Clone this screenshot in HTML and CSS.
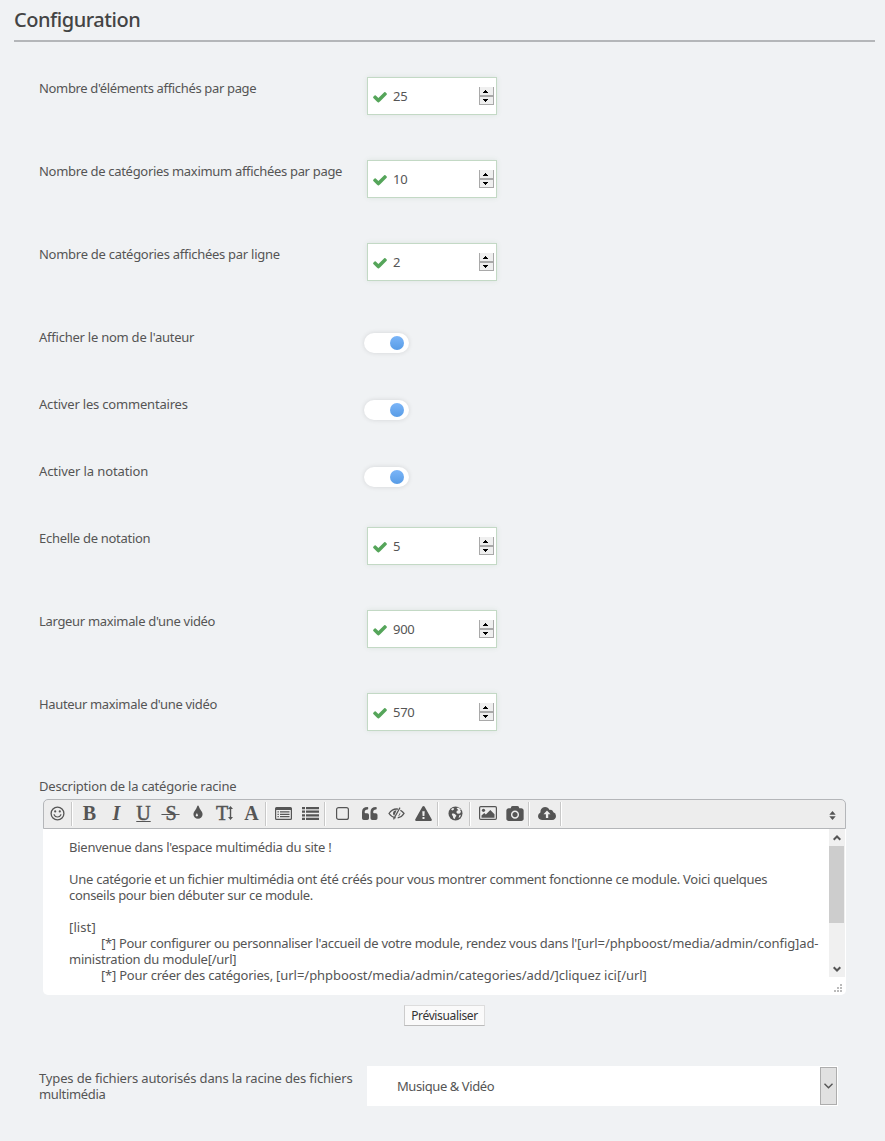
FILE: index.html
```html
<!DOCTYPE html>
<html lang="fr">
<head>
<meta charset="utf-8">
<title>Configuration</title>
<link rel="stylesheet" href="styles.css">
</head>
<body>
<svg class="defs" width="0" height="0">
  <defs>
    <symbol id="check" viewBox="0 0 1792 1792"><path d="M1671 566q0 40-28 68l-724 724-136 136q-28 28-68 28t-68-28l-136-136-362-362q-28-28-28-68t28-68l136-136q28-28 68-28t68 28l294 295 656-657q28-28 68-28t68 28l136 136q28 28 28 68z"/></symbol>
    <symbol id="spin" viewBox="0 0 15 18"><path fill="#efefef" d="M0 0h15v18H0z"/><path fill="#a9a9a9" d="M0 0h1v18H0zM14 0h1v18h-1zM0 8h15v2H0zM0 17h15v1H0z"/><path fill="#000" d="M4 6h5V5H8V4H7V3H6v1H5v1H4zM4 12h5v1H8v1H7v1H6v-1H5v-1H4z"/></symbol>
  </defs>
</svg>
<main class="page">
  <h1 class="title">Configuration</h1>
  <form class="form">
    <div class="row"><label class="label t1">Nombre d'éléments affichés par page</label><div class="number"><svg class="check"><use href="#check"/></svg><span class="value">25</span><svg class="spin"><use href="#spin"/></svg></div></div>
    <div class="row"><label class="label t2">Nombre de catégories maximum affichées par page</label><div class="number"><svg class="check"><use href="#check"/></svg><span class="value">10</span><svg class="spin"><use href="#spin"/></svg></div></div>
    <div class="row"><label class="label t3">Nombre de catégories affichées par ligne</label><div class="number"><svg class="check"><use href="#check"/></svg><span class="value">2</span><svg class="spin"><use href="#spin"/></svg></div></div>
    <div class="row short"><label class="label t4">Afficher le nom de l'auteur</label><div class="toggle"><span class="knob"></span></div></div>
    <div class="row short"><label class="label t5">Activer les commentaires</label><div class="toggle"><span class="knob"></span></div></div>
    <div class="row short"><label class="label t6">Activer la notation</label><div class="toggle"><span class="knob"></span></div></div>
    <div class="row"><label class="label t7">Echelle de notation</label><div class="number"><svg class="check"><use href="#check"/></svg><span class="value">5</span><svg class="spin"><use href="#spin"/></svg></div></div>
    <div class="row"><label class="label t8">Largeur maximale d'une vidéo</label><div class="number"><svg class="check"><use href="#check"/></svg><span class="value">900</span><svg class="spin"><use href="#spin"/></svg></div></div>
    <div class="row"><label class="label t9">Hauteur maximale d'une vidéo</label><div class="number"><svg class="check"><use href="#check"/></svg><span class="value">570</span><svg class="spin"><use href="#spin"/></svg></div></div>

    <label class="desc t10">Description de la catégorie racine</label>
    <section class="editor">
      <div class="toolbar">
        <div class="group">
          <span class="tool"><svg width="15" height="15" viewBox="0 0 15 15"><circle cx="7.5" cy="7.5" r="6.4" fill="none" stroke="#555" stroke-width="1.3"/><circle cx="5.2" cy="5.4" r="1.1"/><circle cx="9.8" cy="5.4" r="1.1"/><path d="M4.1 8.7Q5 11 7.5 11t3.4-2.3" fill="none" stroke="#555" stroke-width="1.2" stroke-linecap="round"/></svg></span>
        </div>
        <div class="group">
          <span class="tool letter">B</span>
          <span class="tool letter italic">I</span>
          <span class="tool letter under">U</span>
          <span class="tool letter strike">&nbsp;S&nbsp;</span>
          <span class="tool"><svg width="16" height="16" viewBox="0 0 1792 1792"><path d="M896 1152q0-36-20-69-1-1-15.5-22.5t-25.5-38-25-44-21-50.5q-4-16-21-16t-21 16q-7 23-21 50.5t-25 44-25.5 38-15.5 22.5q-20 33-20 69 0 53 37.5 90.5t90.5 37.5 90.5-37.5 37.5-90.5zm512-128q0 212-150 362t-362 150-362-150-150-362q0-145 81-275 6-9 62.5-90.5t101-151 99.5-178 83-201.5q9-30 34-47t51-17 51.5 17 33.5 47q28 93 83 201.5t99.5 178 101 151 62.5 90.5q81 127 81 275z"/></svg></span>
          <span class="tool letter size">T<svg width="5" height="14" viewBox="0 0 5 14"><path d="M2.500 0L5 3H3.200v8H5l-2.500 3L0 11h1.800V3H0z"/></svg></span>
          <span class="tool letter">A</span>
        </div>
        <div class="group">
          <span class="tool"><svg width="17" height="13" viewBox="0 0 17 13"><path fill-rule="evenodd" d="M1.500 0h14Q17 0 17 1.500v10Q17 13 15.500 13h-14Q0 13 0 11.500v-10Q0 0 1.500 0zM1.200 3v8.300q0 .5.500.5h13.600q.5 0 .5-.5V3z"/><path d="M2.500 4.300h1.300v1.200H2.500zM5 4.300h9.500v1.200H5zM2.500 6.700h1.300v1.200H2.500zM5 6.700h9.500v1.200H5zM2.500 9.100h1.300v1.200H2.500zM5 9.100h9.500v1.200H5z"/></svg></span>
          <span class="tool"><svg width="17" height="13" viewBox="0 0 17 13"><path d="M0 0h3v2.200H0zM4 0h13v2.200H4zM0 3.600h3v2.200H0zM4 3.600h13v2.200H4zM0 7.200h3v2.200H0zM4 7.200h13v2.200H4zM0 10.800h3V13H0zM4 10.800h13V13H4z"/></svg></span>
        </div>
        <div class="group">
          <span class="tool"><svg width="13" height="13" viewBox="0 0 13 13"><rect x=".6" y=".6" width="11.800" height="11.800" rx="2" fill="none" stroke="#555" stroke-width="1.200"/></svg></span>
          <span class="tool"><svg width="16" height="13" viewBox="0 0 16 13"><path id="q" d="M7 8v3.200Q7 13 5.200 13H1.800Q0 13 0 11.200V5Q0 0 5.500 0q.7 0 .7.700v1q0 .7-.7.700Q2.700 2.400 2.700 5v.4q0 .8.800.8h1.700Q7 6.200 7 8z"/><use href="#q" x="8.500"/></svg></span>
          <span class="tool"><svg width="17" height="13" viewBox="0 0 17 13"><path d="M7.600 10.800Q3.500 10.200 1 6.500 4 2 8.500 2q.8 0 1.600.2M12.400 3.300Q14.700 4.700 16 6.500q-2.300 3.700-6.300 4.300" fill="none" stroke="#555" stroke-width="1.300"/><path d="M11.500.3l1 .6L6 12.700l-1-.6z"/><path d="M8.600 3.200Q5.300 3.200 5 6.200q0 1.500 1.200 2.600zM12.200 5.500q.5 2.700-2.200 4z"/></svg></span>
          <span class="tool"><svg width="17" height="15" viewBox="0 0 17 15"><path fill-rule="evenodd" d="M7.500.600q1-1.200 2 0l7.200 12.700q.5 1.400-1 1.700H1.300q-1.500-.3-1-1.700zM7.300 5.200l.3 4.900h1.800l.3-4.900zM7.500 11v2h2v-2z"/></svg></span>
        </div>
        <div class="group">
          <span class="tool"><svg width="15" height="15" viewBox="0 0 15 15"><circle cx="7.500" cy="7.500" r="7"/><path fill="#ededed" d="M8.500 2.200l1.700-.6q1.700.6 2.900 2.300l-1 .2.900 1.600-1 1.700-2.300.4-1.300-1.300.4-1.700 1.600-.6zM3 3.300l1.800-1.200 1.400.3-.5 1.400-1.500.6zM4.600 7.300l2.300.8 1.600 1.600-1.200 1.500-.3 1.900-1.700-.8-.5-2.200-1-1.300zM11.300 9.200l1.600-.5-.8 2.200-1.500 1z"/></svg></span>
        </div>
        <div class="group">
          <span class="tool"><svg width="18" height="14" viewBox="0 0 18 14"><rect x=".6" y=".6" width="16.800" height="12.800" rx="1.200" fill="none" stroke="#555" stroke-width="1.200"/><circle cx="4.500" cy="4.300" r="1.600"/><path d="M2.500 11.700V9.500L5.300 7l1.500 1.500 4.500-4.400 4.200 4.200v3.400z"/></svg></span>
          <span class="tool"><svg width="18" height="15" viewBox="0 0 1920 1664"><path d="M960 672q119 0 203.500 84.500t84.500 203.500-84.500 203.500-203.500 84.500-203.500-84.500-84.500-203.500 84.500-203.500 203.500-84.500zm704-416q106 0 181 75t75 181v896q0 106-75 181t-181 75h-1408q-106 0-181-75t-75-181v-896q0-106 75-181t181-75h224l51-136q19-49 69.500-84.500t103.500-35.500h512q53 0 103.500 35.500t69.500 84.500l51 136h224zm-704 1152q185 0 316.500-131.500t131.500-316.500-131.500-316.500-316.500-131.500-316.500 131.500-131.500 316.500 131.500 316.500 316.500 131.500z"/></svg></span>
        </div>
        <div class="group">
          <span class="tool"><svg width="18" height="13" viewBox="0 0 18 13"><path fill-rule="evenodd" d="M4 13Q0 12.600 0 9q.1-2.400 2.400-3.500Q2.200.5 7 0q3.200 0 4.600 3 2.800-1.200 3.800 2.300Q18 6 18 9q-.2 3.700-3.800 4zM9 3.500L5.500 7.200h2.400V11h2.300V7.200h2.300z"/></svg></span>
        </div>
        <svg class="more" width="7" height="9" viewBox="0 0 7 9"><path d="M3.500 0L6.700 3.700H.3zM3.500 9L.3 5.300h6.400z"/></svg>
      </div>
      <div class="textarea">
        <div class="content">
          <p class="line"><span class="c1">Bienvenue dans l'espace multimédia du site !</span></p>
          <p class="line"></p>
          <p class="line"><span class="c2">Une catégorie et un fichier multimédia ont été créés pour vous montrer comment fonctionne ce module. Voici quelques</span></p>
          <p class="line"><span class="c3">conseils pour bien débuter sur ce module.</span></p>
          <p class="line"></p>
          <p class="line"><span class="c4">[list]</span></p>
          <p class="line tab"><span class="c5">[*] Pour configurer ou personnaliser l'accueil de votre module, rendez vous dans l'</span><span class="c5b">[url=/phpboost/media/admin/config]ad-</span></p>
          <p class="line"><span class="c6">ministration du module[/url]</span></p>
          <p class="line tab"><span class="c7">[*] Pour créer des catégories, </span><span class="c7b">[url=/phpboost/media/admin/categories/add/]cliquez ici[/url]</span></p>
        </div>
        <div class="side">
          <div class="scrollbar">
            <svg width="8" height="6" viewBox="0 0 8 6"><path d="M.7 4.800L4 1.500l3.300 3.300" fill="none" stroke="#555" stroke-width="2"/></svg>
            <span class="thumb"></span>
            <svg class="down" width="8" height="6" viewBox="0 0 8 6"><path d="M.7 1.200L4 4.500l3.300-3.300" fill="none" stroke="#555" stroke-width="2"/></svg>
          </div>
          <svg class="grip" width="8" height="8" viewBox="0 0 8 8"><path fill="#bbb" d="M6 0h2v2H6zM3 3h2v2H3zM6 3h2v2H6zM0 6h2v2H0zM3 6h2v2H3zM6 6h2v2H6z"/></svg>
        </div>
      </div>
    </section>
    <button type="button" class="preview"><span class="pv">Prévisualiser</span></button>
    <div class="row last">
      <label class="label types"><span class="t11">Types de fichiers autorisés dans la racine des fichiers</span><br><span class="t12">multimédia</span></label>
      <div class="select"><span class="sv">Musique &amp; Vidéo</span><span class="arrow"><svg width="9" height="6" viewBox="0 0 9 6"><path d="M.5.800l4 4 4-4" fill="none" stroke="#555" stroke-width="1.400"/></svg></span></div>
    </div>
  </form>
</main>
</body>
</html>
```

FILE: styles.css
```css
* { box-sizing: border-box; }
body { margin: 0; background: #f0f2f4; color: #555; font: 13px/16px "Trebuchet MS", "Noto Sans", "Open Sans", sans-serif; }
svg { display: block; flex: none; fill: #555; }
.defs { position: absolute; }
.page { height: 1141px; padding: 0 10px 0 14px; overflow: hidden; }
.title { margin: 0; height: 42px; padding-top: 7px; border-bottom: 2px solid #b4b6b9; font-size: 20px; line-height: 26px; font-weight: 500; letter-spacing: -.46px; color: #444; }
.form { display: flex; flex-direction: column; padding: 35px 25px 0; }
.row { display: flex; height: 83px; flex: none; }
.row.short { height: 67px; }
.label { width: 328px; padding-top: 3px; white-space: nowrap; }
.number { display: flex; align-items: center; width: 130px; height: 38px; padding: 0 2px 0 4px; background: #fff; border: 1px solid #c3d9c5; box-shadow: 0 0 5px rgba(80,130,80,.12); }
.check { width: 16px; height: 16px; margin: 1px 5px 0 0; fill: #55a55a; }
.value { flex: 1; letter-spacing: -.3px; }
.spin { width: 15px; height: 18px; }
.toggle { display: flex; align-items: center; justify-content: flex-end; width: 45px; height: 20px; margin: 7px 0 0 -3px; padding-right: 5px; border-radius: 10px; background: #fff; box-shadow: 0 0 5px rgba(0,0,0,.12); }
.knob { width: 14px; height: 14px; border-radius: 50%; background: linear-gradient(#7bb5f8, #589ce6); }
.desc { margin-top: 2px; height: 21px; white-space: nowrap; }
.editor { width: 803px; margin-left: 4px; }
.toolbar { display: flex; align-items: center; height: 30px; background: #ededed; border: 1px solid #b4b6b9; border-radius: 5px 5px 0 0; }
.group { display: flex; height: 24px; margin-left: 4px; border-right: 1px solid #c8c8c8; box-shadow: 1px 0 #fff; }
.group:first-child { margin-left: 0; }
.tool { display: flex; align-items: center; justify-content: center; width: 27px; height: 24px; padding-bottom: 2px; }
.letter { font: bold 20px/22px "Liberation Serif", serif; }
.italic { font-style: italic; }
.under { text-decoration: underline; text-decoration-thickness: 1px; font-weight: normal; -webkit-text-stroke: .5px #555; }
.strike { text-decoration: line-through; text-decoration-thickness: 1px; font-weight: normal; -webkit-text-stroke: .5px #555; letter-spacing: -1px; }
.size { font-weight: normal; -webkit-text-stroke: .5px #555; }
.more { margin: 3px 9px 0 auto; }
.textarea { display: flex; height: 166px; background: #fff; border-radius: 0 0 5px 5px; }
.content { flex: 1; padding: 10px 0 0 26px; overflow: hidden; white-space: nowrap; }
.line { margin: 0; height: 16px; }
.tab { padding-left: 32px; }
.side { width: 17px; }
.scrollbar { display: flex; flex-direction: column; align-items: center; width: 16px; height: 148px; padding-top: 6px; background: #f0f0f0; }
.thumb { width: 15px; height: 77px; margin-top: 5px; background: #cdcdcd; align-self: flex-start; }
.down { margin: auto 0 5px; }
.grip { margin: 7px 0 0 5px; }
.preview { align-self: flex-start; width: 81px; height: 21px; margin: 10px 0 0 365px; padding: 0; background: #fafafa; border: 1px solid; border-color: #ddd #ddd #bbb #ccc; color: #333; font: 12px/16px "Trebuchet MS", "Noto Sans", sans-serif; white-space: nowrap; }
.last { height: 75px; margin-top: 40px; }
.types { padding-top: 4px; }
.select { display: flex; align-items: center; width: 471px; height: 40px; padding: 1px 1px 1px 30px; background: #fff; flex: none; }
.arrow { display: flex; align-items: center; justify-content: center; width: 17px; height: 38px; margin-left: auto; background: #e1e1e1; border: 1px solid #adadad; }

/* Tracking per text run */
.t1 { letter-spacing: -.34px; }
.t2 { letter-spacing: -.31px; }
.t3 { letter-spacing: -.275px; }
.t4 { letter-spacing: -.24px; }
.t5 { letter-spacing: -.19px; }
.t6 { letter-spacing: -.1px; }
.t7 { letter-spacing: -.29px; }
.t8 { letter-spacing: -.32px; }
.t9 { letter-spacing: -.34px; }
.t10 { letter-spacing: -.2px; }
.t11 { letter-spacing: -.15px; }
.t12 { letter-spacing: -.33px; }
.c1 { letter-spacing: -.24px; }
.c2 { letter-spacing: -.27px; }
.c3 { letter-spacing: -.32px; }
.c4 { letter-spacing: .1px; }
.c5 { letter-spacing: -.29px; }
.c5b { letter-spacing: -.1px; }
.c6 { letter-spacing: -.23px; }
.c7 { letter-spacing: -.22px; }
.c7b { letter-spacing: -.04px; }
.sv { letter-spacing: -.42px; }
.pv { letter-spacing: -.36px; }
```
